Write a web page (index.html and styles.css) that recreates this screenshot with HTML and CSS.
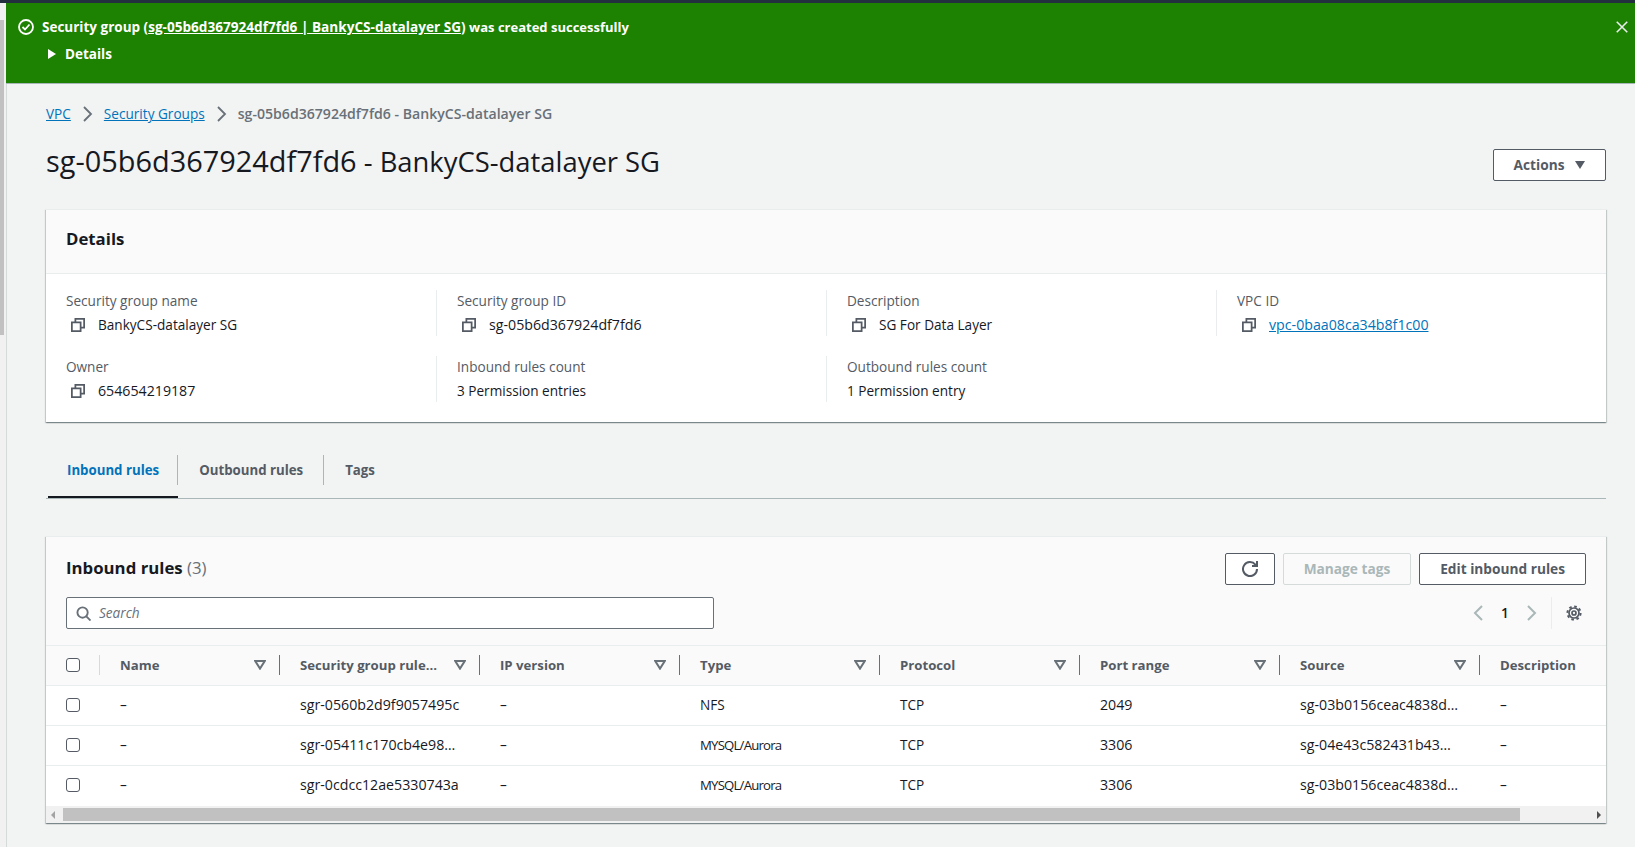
FILE: index.html
```html
<!DOCTYPE html>
<html lang="en">
<head>
  <meta charset="UTF-8">
  <title>sg-05b6d367924df7fd6 - BankyCS-datalayer SG</title>
  <link rel="stylesheet" href="styles.css">
</head>
<body>
  <div class="topbar"></div>
  <div class="shell">
    <div class="page-scroll"><div class="page-thumb"></div></div>
    <div class="page">
      <div class="flash">
        <div class="flash-main">
          <div class="flash-line">
            <svg class="flash-icon" viewBox="0 0 16 16"><circle cx="8" cy="8" r="7"/><path d="M4.5 8l2.5 2.5 4.5-5"/></svg>
            <span>Security group (<a href="#">sg-05b6d367924df7fd6 | BankyCS-datalayer SG</a>) <span class="flash-rest">was created successfully</span></span>
          </div>
          <div class="flash-details"><i class="caret-right"></i>Details</div>
        </div>
        <svg class="flash-close" viewBox="0 0 16 16"><path d="M2 2l12 12M14 2L2 14"/></svg>
      </div>

      <main class="content">
        <nav class="crumbs">
          <a href="#">VPC</a>
          <svg class="chev" viewBox="0 0 10 16"><path d="M1 1l7 7-7 7"/></svg>
          <a href="#">Security Groups</a>
          <svg class="chev" viewBox="0 0 10 16"><path d="M1 1l7 7-7 7"/></svg>
          <span>sg-05b6d367924df7fd6 - BankyCS-datalayer SG</span>
        </nav>

        <div class="title-row">
          <h1><span class="h1-id">sg-05b6d367924df7fd6</span> - BankyCS-datalayer SG</h1>
          <button class="btn btn-actions">Actions <i class="caret-down"></i></button>
        </div>

        <section class="card">
          <h2 class="details-head">Details</h2>
          <div class="details-grid">
            <div class="cell">
              <div class="label">Security group name</div>
              <div class="value"><svg class="copy" viewBox="0 0 16 16"><path d="M1 5h10v10H1zM5 5V1h10v10h-4"/></svg>BankyCS-datalayer SG</div>
            </div>
            <div class="cell">
              <div class="label">Security group ID</div>
              <div class="value id"><svg class="copy" viewBox="0 0 16 16"><path d="M1 5h10v10H1zM5 5V1h10v10h-4"/></svg>sg-05b6d367924df7fd6</div>
            </div>
            <div class="cell">
              <div class="label">Description</div>
              <div class="value"><svg class="copy" viewBox="0 0 16 16"><path d="M1 5h10v10H1zM5 5V1h10v10h-4"/></svg>SG For Data Layer</div>
            </div>
            <div class="cell">
              <div class="label">VPC ID</div>
              <div class="value id"><svg class="copy" viewBox="0 0 16 16"><path d="M1 5h10v10H1zM5 5V1h10v10h-4"/></svg><a href="#">vpc-0baa08ca34b8f1c00</a></div>
            </div>
            <div class="cell">
              <div class="label">Owner</div>
              <div class="value id"><svg class="copy" viewBox="0 0 16 16"><path d="M1 5h10v10H1zM5 5V1h10v10h-4"/></svg>654654219187</div>
            </div>
            <div class="cell">
              <div class="label">Inbound rules count</div>
              <div class="value">3 Permission entries</div>
            </div>
            <div class="cell">
              <div class="label">Outbound rules count</div>
              <div class="value">1 Permission entry</div>
            </div>
            <div class="cell cell-empty"></div>
          </div>
        </section>

        <div class="tabs">
          <a class="tab active" href="#"><span>Inbound rules</span></a>
          <a class="tab" href="#"><span>Outbound rules</span></a>
          <a class="tab" href="#"><span>Tags</span></a>
        </div>

        <section class="card rules">
          <div class="rules-head">
            <div class="rules-top">
              <h2>Inbound rules <span class="count">(3)</span></h2>
              <div class="rules-actions">
                <button class="btn btn-icon"><svg viewBox="0 0 16 16"><path d="M10 5h5V0"/><path d="M15 8a7 7 0 1 1-1.6-4.4L15 5"/></svg></button>
                <button class="btn btn-off">Manage tags</button>
                <button class="btn">Edit inbound rules</button>
              </div>
            </div>
            <div class="rules-filter">
              <div class="search">
                <svg viewBox="0 0 16 16"><circle cx="7" cy="7" r="5.5"/><path d="M11 11l4.5 4.5"/></svg>
                <input type="text" placeholder="Search">
              </div>
              <div class="pager">
                <svg class="pager-arrow" viewBox="0 0 10 16"><path d="M9 1L2 8l7 7"/></svg>
                <span>1</span>
                <svg class="pager-arrow" viewBox="0 0 10 16"><path d="M1 1l7 7-7 7"/></svg>
                <div class="pager-gear">
                  <svg viewBox="0 0 16 16"><circle class="teeth" cx="8" cy="8" r="6.6"/><circle cx="8" cy="8" r="5"/><circle cx="8" cy="8" r="2"/></svg>
                </div>
              </div>
            </div>
          </div>

          <div class="table-wrap">
            <table>
              <colgroup>
                <col class="col-check"><col class="col-name">
                <col class="col-std"><col class="col-std"><col class="col-std"><col class="col-std"><col class="col-std"><col class="col-std"><col class="col-std">
              </colgroup>
              <thead>
                <tr>
                  <th class="th-check"><input class="check" type="checkbox"></th>
                  <th><div class="th-in">Name<svg class="sort" viewBox="0 0 12 10"><path d="M1.2 1h9.6L6 8.6z"/></svg></div></th>
                  <th><div class="th-in">Security group rule…<svg class="sort" viewBox="0 0 12 10"><path d="M1.2 1h9.6L6 8.6z"/></svg></div></th>
                  <th><div class="th-in">IP version<svg class="sort" viewBox="0 0 12 10"><path d="M1.2 1h9.6L6 8.6z"/></svg></div></th>
                  <th><div class="th-in">Type<svg class="sort" viewBox="0 0 12 10"><path d="M1.2 1h9.6L6 8.6z"/></svg></div></th>
                  <th><div class="th-in">Protocol<svg class="sort" viewBox="0 0 12 10"><path d="M1.2 1h9.6L6 8.6z"/></svg></div></th>
                  <th><div class="th-in">Port range<svg class="sort" viewBox="0 0 12 10"><path d="M1.2 1h9.6L6 8.6z"/></svg></div></th>
                  <th><div class="th-in">Source<svg class="sort" viewBox="0 0 12 10"><path d="M1.2 1h9.6L6 8.6z"/></svg></div></th>
                  <th class="th-last"><div class="th-in">Description</div></th>
                </tr>
              </thead>
              <tbody>
                <tr>
                  <td class="td-check"><input class="check" type="checkbox"></td>
                  <td>–</td><td class="id">sgr-0560b2d9f9057495c</td><td>–</td><td>NFS</td><td>TCP</td><td class="id">2049</td><td class="id">sg-03b0156ceac4838d…</td><td>–</td>
                </tr>
                <tr>
                  <td class="td-check"><input class="check" type="checkbox"></td>
                  <td>–</td><td class="id">sgr-05411c170cb4e98…</td><td>–</td><td class="caps">MYSQL/Aurora</td><td>TCP</td><td class="id">3306</td><td class="id">sg-04e43c582431b43…</td><td>–</td>
                </tr>
                <tr>
                  <td class="td-check"><input class="check" type="checkbox"></td>
                  <td>–</td><td class="id">sgr-0cdcc12ae5330743a</td><td>–</td><td class="caps">MYSQL/Aurora</td><td>TCP</td><td class="id">3306</td><td class="id">sg-03b0156ceac4838d…</td><td>–</td>
                </tr>
              </tbody>
            </table>
          </div>

          <div class="hscroll">
            <i class="hs-left"></i>
            <div class="hs-thumb"></div>
            <i class="hs-right"></i>
          </div>
        </section>
      </main>
    </div>
  </div>
</body>
</html>
```

FILE: styles.css
```css
* {
  box-sizing: border-box;
}
html, body {
  margin: 0;
  height: 847px;
  overflow: hidden;
}
body {
  font-family: "Open Sans", "Noto Sans", sans-serif;
  font-size: 13.6px;
  line-height: 22px;
  color: #16191f;
  background: #f2f3f3;
}
a {
  color: #0073bb;
}
svg {
  fill: none;
  display: block;
  flex: none;
}
.id {
  font-size: 14.2px;
}
.caps {
  font-size: 13.2px;
  letter-spacing: -0.8px;
}

.topbar {
  height: 3px;
  background: #232f3e;
}
.shell {
  display: flex;
  height: 844px;
}
.page-scroll {
  width: 6px;
  flex: none;
  background: #f1f1f1;
  padding-top: 17px;
}
.page-thumb {
  width: 4px;
  height: 315px;
  background: #c1c1c1;
}
.page {
  flex: 1;
  min-width: 0;
  border-left: 1px solid #d5dbdb;
}

/* flash banner */
.flash {
  height: 81px;
  margin-left: -1px;
  background: #1d8102;
  color: #fff;
  font-weight: 700;
  font-size: 13.5px;
  display: flex;
  justify-content: space-between;
  border-bottom: 1px solid #aab7b8;
  padding: 13px 6px 0 12px;
}
.flash a {
  color: #fff;
  font-size: 13.6px;
}
.flash-rest {
  font-size: 13px;
}
.flash-line {
  display: flex;
  align-items: center;
  gap: 8px;
}
.flash-icon {
  width: 16px;
  height: 16px;
  stroke: #fff;
  stroke-width: 1.8;
}
.flash-details {
  display: flex;
  align-items: center;
  margin-top: 5px;
  padding-left: 30px;
}
.caret-right {
  width: 0;
  height: 0;
  border-left: 8px solid #fff;
  border-top: 5px solid transparent;
  border-bottom: 5px solid transparent;
  margin-right: 9px;
}
.flash-close {
  width: 14px;
  height: 14px;
  margin-top: 4px;
  stroke: #eaeded;
  stroke-width: 1.8;
}

/* page content */
.content {
  padding: 20px 29px 0 39px;
}
.crumbs {
  display: flex;
  align-items: center;
  height: 20px;
  color: #687078;
}
.crumbs span {
  font-size: 14.1px;
  font-weight: 600;
}
.chev {
  width: 10px;
  height: 16px;
  margin: 0 11px 0 12px;
  stroke: #687078;
  stroke-width: 1.8;
}
.title-row {
  display: flex;
  justify-content: space-between;
  align-items: center;
  height: 34px;
  margin-top: 24px;
}
h1 {
  margin: 0 0 8px;
  font-size: 27.4px;
  line-height: 34px;
  font-weight: 400;
}
.h1-id {
  font-size: 28.9px;
}
.btn {
  font: inherit;
  font-size: 13.7px;
  font-weight: 700;
  color: #545b64;
  background: #fff;
  border: 1px solid #545b64;
  border-radius: 2px;
  height: 32px;
  padding: 0 20px;
}
.btn-actions {
  width: 113px;
  padding: 0;
  display: flex;
  align-items: center;
  justify-content: center;
  gap: 11px;
}
.caret-down {
  width: 0;
  height: 0;
  border-top: 8px solid #545b64;
  border-left: 5.5px solid transparent;
  border-right: 5.5px solid transparent;
}

.card {
  background: #fff;
  border-top: 1px solid #eaeded;
  box-shadow: 0 1px 1px 0 rgba(0, 28, 36, 0.3), 1px 1px 1px 0 rgba(0, 28, 36, 0.15), -1px 1px 1px 0 rgba(0, 28, 36, 0.15);
}
.title-row + .card {
  margin-top: 27px;
}

/* details */
.details-head {
  margin: 0;
  height: 64px;
  padding-top: 18px;
  padding-left: 20px;
  font-size: 16.8px;
  line-height: 22px;
  font-weight: 700;
  background: #fafafa;
  border-bottom: 1px solid #eaeded;
}
.details-grid {
  display: grid;
  grid-template-columns: repeat(4, 1fr);
  row-gap: 20px;
  padding: 16px 0 20px;
}
.cell {
  height: 46px;
  padding-left: 20px;
  border-left: 1px solid #eaeded;
}
.cell:nth-child(4n + 1) {
  border-left: 0;
}
.cell-empty {
  border-left: 0;
}
.label {
  color: #545b64;
  margin-bottom: 2px;
}
.value {
  display: flex;
  align-items: center;
}
.value a {
  color: #0073bb;
}
.copy {
  width: 14px;
  height: 14px;
  margin: 0 13px 0 5px;
  stroke: #545b64;
  stroke-width: 2;
}

/* tabs */
.tabs {
  display: flex;
  margin-top: 33px;
  border-bottom: 1px solid #aab7b8;
  height: 44px;
}
.tab {
  display: block;
  height: 43px;
  color: #545b64;
  font-size: 13.25px;
  font-weight: 700;
  text-decoration: none;
}
.tab span {
  display: block;
  height: 30px;
  line-height: 30px;
  padding: 0 20px 0 21px;
  border-right: 1px solid #aab7b8;
}
.tab:last-child span {
  border-right: 0;
}
.tab.active {
  color: #0073bb;
  border-bottom: 2px solid #16191f;
  margin-left: 2px;
}
.tab.active span {
  padding-left: 19px;
  padding-right: 18px;
}

/* rules table */
.rules {
  margin-top: 37px;
}
.rules-head {
  background: #fafafa;
  padding: 16px 20px 0;
  height: 109px;
  border-bottom: 1px solid #eaeded;
}
.rules-top {
  display: flex;
  justify-content: space-between;
  align-items: center;
  height: 32px;
}
.rules-top h2 {
  margin: 0 0 2px;
  font-size: 16.8px;
  font-weight: 700;
}
.count {
  font-weight: 400;
  color: #687078;
}
.rules-actions {
  display: flex;
  gap: 8px;
}
.btn-icon {
  width: 50px;
  padding: 0;
  display: flex;
  align-items: center;
  justify-content: center;
}
.btn-icon svg {
  width: 16px;
  height: 16px;
  stroke: #545b64;
  stroke-width: 2;
}
.btn-off {
  color: #aab7b8;
  background: #fafafa;
  border-color: #d5dbdb;
}
.rules-filter {
  display: flex;
  justify-content: space-between;
  align-items: center;
  margin-top: 12px;
}
.search {
  width: 648px;
  height: 32px;
  display: flex;
  align-items: center;
  gap: 8px;
  padding-left: 9px;
  background: #fff;
  border: 1px solid #687078;
  border-radius: 2px;
}
.search svg {
  width: 15px;
  height: 15px;
  stroke: #687078;
  stroke-width: 2;
}
.search input {
  flex: 1;
  border: 0;
  outline: 0;
  padding: 0;
  background: none;
  font: inherit;
  font-style: italic;
}
.search input::placeholder {
  color: #687078;
  opacity: 1;
}
.pager {
  display: flex;
  align-items: center;
  font-weight: 600;
  height: 32px;
  margin-right: 4px;
}
.pager span {
  width: 18px;
  text-align: center;
  margin: 0 13px;
}
.pager-arrow {
  width: 10px;
  height: 16px;
  stroke: #aab7b8;
  stroke-width: 2;
}
.pager-gear {
  height: 32px;
  margin-left: 14px;
  padding: 8px 0 0 14px;
  border-left: 1px solid #eaeded;
}
.pager-gear svg {
  width: 16px;
  height: 16px;
  stroke: #545b64;
  stroke-width: 1.7;
}
.teeth {
  stroke-width: 2;
  stroke-dasharray: 2.6 2.58;
}

.table-wrap {
  overflow: hidden;
}
table {
  border-collapse: collapse;
  table-layout: fixed;
  width: 1634px;
}
.col-check {
  width: 54px;
}
.col-name {
  width: 180px;
}
.col-std {
  width: 200px;
}
th {
  height: 39px;
  padding: 0;
  font-size: 13.2px;
  font-weight: 700;
  color: #545b64;
  text-align: left;
  background: #fafafa;
  border-bottom: 1px solid #eaeded;
}
.th-in {
  height: 20px;
  line-height: 20px;
  display: flex;
  justify-content: space-between;
  align-items: center;
  padding: 0 13px 0 20px;
  border-right: 1px solid #687078;
}
.th-check {
  padding-left: 20px;
  position: relative;
}
.th-check::after {
  content: "";
  position: absolute;
  right: 0;
  top: 9px;
  height: 20px;
  border-right: 1px solid #d5dbdb;
}
.th-last .th-in {
  border-right: 0;
}
.sort {
  width: 12px;
  height: 10px;
  stroke: #687078;
  stroke-width: 2;
}
td {
  height: 40px;
  padding: 0 0 0 20px;
  white-space: nowrap;
  border-bottom: 1px solid #eaeded;
}
tbody tr:last-child td {
  height: 41px;
  padding-bottom: 1px;
  border-bottom: 0;
}
.check {
  appearance: none;
  display: block;
  width: 14px;
  height: 14px;
  margin: 0;
  background: #fff;
  border: 1px solid #545b64;
  border-radius: 3px;
}

.hscroll {
  display: flex;
  align-items: center;
  height: 17px;
  background: #f1f1f1;
  padding: 0 5px;
}
.hs-left {
  width: 0;
  height: 0;
  border-right: 4px solid #a3a3a3;
  border-top: 4px solid transparent;
  border-bottom: 4px solid transparent;
}
.hs-right {
  width: 0;
  height: 0;
  margin-left: auto;
  border-left: 4px solid #505050;
  border-top: 4px solid transparent;
  border-bottom: 4px solid transparent;
}
.hs-thumb {
  width: 1457px;
  height: 13px;
  margin-left: 8px;
  background: #c1c1c1;
}
```
